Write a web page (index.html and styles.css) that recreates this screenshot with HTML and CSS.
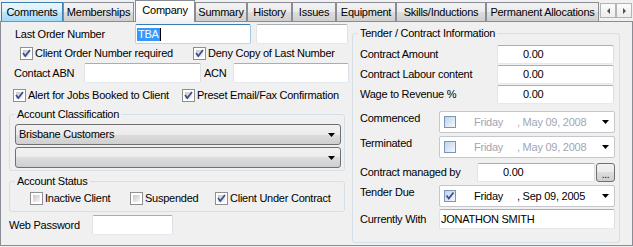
FILE: index.html
```html
<!DOCTYPE html>
<html lang="en">

<head>
    <meta charset="UTF-8">
    <title>Company</title>
    <link rel="stylesheet" href="styles.css">
</head>

<body>
    <div class="tabs">
        <div class="tab hot w-comments">Comments</div>
        <div class="tab w-memberships">Memberships</div>
        <div class="tab active w-company">Company</div>
        <div class="tab w-summary">Summary</div>
        <div class="tab w-history">History</div>
        <div class="tab w-issues">Issues</div>
        <div class="tab w-equipment">Equipment</div>
        <div class="tab w-skills">Skills/Inductions</div>
        <div class="tab w-permanent">Permanent Allocations</div>
        <div class="scroller">
            <div class="scroll-btn"><span class="arr-left"></span></div>
            <div class="scroll-btn"><span class="arr-right"></span></div>
        </div>
    </div>

    <div class="panel">
        <div class="left">
            <div class="row row-order">
                <span class="lbl w-order">Last Order Number</span>
                <div class="field focus w-tba"><span class="sel">TBA</span><span class="caret"></span></div>
                <div class="field w-order2"></div>
            </div>

            <div class="row row-check1">
                <label class="check w-cor"><span class="box"><svg viewBox="0 0 11 11"><polyline points="2,5 4.3,8 9,2" /></svg></span>Client Order Number required</label>
                <label class="check"><span class="box"><svg viewBox="0 0 11 11"><polyline points="2,5 4.3,8 9,2" /></svg></span>Deny Copy of Last Number</label>
            </div>

            <div class="row row-abn">
                <span class="lbl w-abn">Contact ABN</span>
                <div class="field w-abnf"></div>
                <span class="lbl w-acn">ACN</span>
                <div class="field w-acnf"></div>
            </div>

            <div class="row row-check2">
                <label class="check w-alert"><span class="box"><svg viewBox="0 0 11 11"><polyline points="2,5 4.3,8 9,2" /></svg></span>Alert for Jobs Booked to Client</label>
                <label class="check"><span class="box"><svg viewBox="0 0 11 11"><polyline points="2,5 4.3,8 9,2" /></svg></span>Preset Email/Fax Confirmation</label>
            </div>

            <fieldset class="group group-class">
                <legend>Account Classification</legend>
                <div class="combo"><span>Brisbane Customers</span><svg class="drop" viewBox="0 0 7 4"><polygon points="0,0 7,0 3.5,4" /></svg></div>
                <div class="combo combo2"><span></span><svg class="drop" viewBox="0 0 7 4"><polygon points="0,0 7,0 3.5,4" /></svg></div>
            </fieldset>

            <fieldset class="group group-status">
                <legend>Account Status</legend>
                <div class="status-row">
                    <label class="check w-inactive"><span class="box"></span>Inactive Client</label>
                    <label class="check w-susp"><span class="box"></span>Suspended</label>
                    <label class="check"><span class="box"><svg viewBox="0 0 11 11"><polyline points="2,5 4.3,8 9,2" /></svg></span>Client Under Contract</label>
                </div>
            </fieldset>

            <div class="row row-web">
                <span class="lbl w-web">Web Password</span>
                <div class="field w-webf"></div>
            </div>
        </div>

        <fieldset class="group tender">
            <legend>Tender / Contract Information</legend>

            <div class="t-row t-first">
                <span class="lbl w-amt">Contract Amount</span>
                <div class="field num w-amtf">0.00</div>
            </div>
            <div class="t-row t-next">
                <span class="lbl w-amt">Contract Labour content</span>
                <div class="field num w-amtf">0.00</div>
            </div>
            <div class="t-row t-next">
                <span class="lbl w-amt">Wage to Revenue %</span>
                <div class="field num w-amtf">0.00</div>
            </div>

            <div class="t-row t-date t-commenced">
                <span class="lbl w-date">Commenced</span>
                <div class="dtp disabled">
                    <span class="dcb"></span>
                    <span class="day">Friday</span>
                    <span>, May 09, 2008</span>
                    <svg class="drop" viewBox="0 0 7 4"><polygon points="0,0 7,0 3.5,4" /></svg>
                </div>
            </div>
            <div class="t-row t-date t-terminated">
                <span class="lbl w-date">Terminated</span>
                <div class="dtp disabled">
                    <span class="dcb"></span>
                    <span class="day">Friday</span>
                    <span>, May 09, 2008</span>
                    <svg class="drop" viewBox="0 0 7 4"><polygon points="0,0 7,0 3.5,4" /></svg>
                </div>
            </div>

            <div class="t-row t-managed">
                <span class="lbl w-managed">Contract managed by</span>
                <div class="field num w-managedf">0.00</div>
                <div class="btn">...</div>
            </div>

            <div class="t-row t-date t-due">
                <span class="lbl w-date">Tender Due</span>
                <div class="dtp">
                    <span class="dcb"><svg viewBox="0 0 10 10"><polyline points="1.5,4.5 3.8,7.5 8.5,1.5" /></svg></span>
                    <span class="day">Friday</span>
                    <span>, Sep 09, 2005</span>
                    <svg class="drop" viewBox="0 0 7 4"><polygon points="0,0 7,0 3.5,4" /></svg>
                </div>
            </div>

            <div class="t-row t-with">
                <span class="lbl w-date">Currently With</span>
                <div class="field w-with">JONATHON SMITH</div>
            </div>
        </fieldset>
    </div>
</body>

</html>
```

FILE: styles.css
```css
* {
    box-sizing: border-box;
}

body {
    margin: 0;
    width: 633px;
    height: 247px;
    overflow: hidden;
    background-color: #f0f0f0;
    font-family: 'Liberation Sans', Arial, sans-serif;
    font-size: 11px;
    line-height: 13px;
    letter-spacing: -0.25px;
    color: #000;
}

/* tab strip */

.tabs {
    display: flex;
    align-items: flex-end;
    height: 21px;
    padding-left: 1px;
}

.tab {
    height: 19px;
    border: 1px solid #898c95;
    border-bottom: none;
    background: linear-gradient(#f2f2f2, #ebebeb 50%, #dddddd 50%, #cfcfcf);
    display: flex;
    align-items: center;
    justify-content: center;
    white-space: nowrap;
}

.tab.hot {
    border-color: #3c7fb1;
    background: linear-gradient(#eaf6fd, #d9f0fc 50%, #bee6fd 50%, #a7d9f5);
}

.tab.active {
    height: 22px;
    margin: 0 0 -1px 1px;
    padding-bottom: 3px;
    background: linear-gradient(#fff 55%, #f0f0f0);
    z-index: 1;
}

.w-comments { width: 62px; }
.w-memberships { width: 71px; }
.w-company { width: 60px; }
.w-summary { width: 52px; }
.w-history { width: 45px; }
.w-issues { width: 44px; }
.w-equipment { width: 60px; }
.w-skills { width: 90px; }
.w-permanent { width: 113px; }

.scroller {
    display: flex;
    align-self: flex-start;
    margin: 3px 0 0 1px;
}

.scroll-btn {
    width: 16px;
    height: 15px;
    border: 1px solid #b4b4b4;
    background: linear-gradient(#fbfbfb, #ececec);
    display: flex;
    align-items: center;
    justify-content: center;
}

.arr-left {
    border-top: 3px solid transparent;
    border-bottom: 3px solid transparent;
    border-right: 3px solid #505050;
}

.arr-right {
    border-top: 3px solid transparent;
    border-bottom: 3px solid transparent;
    border-left: 3px solid #505050;
}

/* page */

.panel {
    display: flex;
    height: 225px;
    border: 1px solid #898c95;
}

.left {
    width: 351px;
}

.row {
    display: flex;
    align-items: center;
}

.lbl {
    white-space: nowrap;
    flex-shrink: 0;
}

.field {
    height: 100%;
    flex-shrink: 0;
    display: flex;
    align-items: center;
    padding-left: 1px;
    background-color: #fff;
    border: 1px solid;
    border-color: #abadb3 #dbdfe6 #e3e9ef #e2e3ea;
    border-radius: 2px;
    white-space: nowrap;
}

.field.focus {
    border-color: #3d7bad #a4c9e3 #b7d9ed #b5cfe7;
}

.field.num {
    padding-left: 25px;
}

.sel {
    background-color: #3399ff;
    color: #fff;
    padding: 0 1px;
}

.caret {
    width: 1px;
    height: 13px;
    background-color: #000;
}

.check {
    display: flex;
    align-items: center;
    gap: 2px;
    white-space: nowrap;
}

.box {
    width: 13px;
    height: 13px;
    padding: 2px;
    flex-shrink: 0;
    border: 1px solid #8e8f8f;
    background: linear-gradient(135deg, #c8c8c8, #f7f7f7) content-box, #fff;
}

.box svg {
    display: block;
    width: 11px;
    height: 11px;
    margin: -2px;
}

.box polyline,
.dcb polyline {
    fill: none;
    stroke: #3d4f8f;
    stroke-width: 1.8;
}

.row-order {
    height: 20px;
    margin-top: 2px;
}

.w-order { margin-left: 14px; width: 120px; }
.w-tba { width: 116px; }
.w-order2 { width: 92px; margin-left: 5px; }

.row-check1 {
    height: 16px;
    margin-top: 1px;
    padding-left: 19px;
}

.w-cor { width: 173px; }

.row-abn {
    height: 20px;
    margin-top: 2px;
}

.w-abn { margin-left: 13px; width: 70px; }
.w-abnf { width: 117px; }
.w-acn { margin-left: 3px; width: 29px; }
.w-acnf { width: 116px; }

.row-check2 {
    height: 16px;
    margin-top: 4px;
    padding-left: 12px;
}

.w-alert { width: 169px; }

/* group boxes */

.group {
    margin: 0;
    padding: 0;
    min-width: 0;
    border: 1px solid #d5dfe5;
    border-radius: 3px;
}

.group legend {
    padding: 0 2px;
    margin-left: 5px;
    line-height: 13px;
}

.group-class {
    width: 336px;
    margin: 5px 0 0 8px;
    padding: 3px 0 2px 0;
}

.combo {
    width: 326px;
    height: 21px;
    margin-left: 5px;
    display: flex;
    align-items: center;
    justify-content: space-between;
    padding: 0 5px 0 3px;
    border: 1px solid #707070;
    border-radius: 3px;
    background: linear-gradient(#f2f2f2, #ebebeb 50%, #dddddd 50%, #cfcfcf);
}

.combo2 {
    margin-top: 2px;
}

.drop {
    width: 7px;
    height: 4px;
    flex-shrink: 0;
}

.group-status {
    width: 336px;
    margin: 4px 0 0 8px;
    padding: 4px 0 6px 0;
}

.status-row {
    display: flex;
    align-items: center;
    height: 13px;
    margin-left: 20px;
}

.w-inactive { width: 100px; }
.w-susp { width: 85px; }

.row-web {
    height: 20px;
    margin-top: 3px;
}

.w-web { margin-left: 8px; width: 83px; }
.w-webf { width: 81px; }

/* tender / contract */

.tender {
    width: 268px;
    height: 216px;
    margin-top: 5px;
}

.t-row {
    display: flex;
    align-items: center;
    margin-left: 7px;
    height: 19px;
}

.t-first { margin-top: 5px; }
.t-next { margin-top: 1px; }

.w-amt { width: 137px; }
.w-amtf { width: 117px; }

.t-date {
    align-items: flex-start;
    height: 22px;
}

.t-date .lbl {
    padding-top: 1px;
}

.t-commenced { margin-top: 7px; }
.t-terminated { margin-top: 3px; }
.t-managed { margin-top: 5px; }
.t-due { margin-top: 3px; }

.t-with {
    height: 20px;
    margin-top: 2px;
}

.w-date { width: 79px; }
.w-with { width: 176px; }
.w-managed { width: 117px; }
.w-managedf { width: 118px; }

.dtp {
    width: 176px;
    height: 22px;
    display: flex;
    align-items: center;
    padding: 0 5px 0 4px;
    background-color: #fff;
    border: 1px solid #c5c7cc;
    border-radius: 2px;
    white-space: nowrap;
}

.dtp.disabled {
    color: #9fa6b3;
}

.dcb {
    width: 12px;
    height: 12px;
    flex-shrink: 0;
    border: 1px solid #7b95b4;
    background: linear-gradient(135deg, #bcd5ee, #f4f8fc);
}

.dcb svg {
    display: block;
    width: 10px;
    height: 10px;
}

.day {
    width: 43px;
    margin-left: 18px;
}

.dtp .drop {
    margin-left: auto;
}

.btn {
    width: 19px;
    height: 19px;
    margin-left: 1px;
    border: 1px solid #707070;
    border-radius: 3px;
    background: linear-gradient(#f2f2f2, #ebebeb 50%, #dddddd 50%, #cfcfcf);
    display: flex;
    align-items: flex-end;
    justify-content: center;
    line-height: 12px;
    font-size: 10px;
}
```
